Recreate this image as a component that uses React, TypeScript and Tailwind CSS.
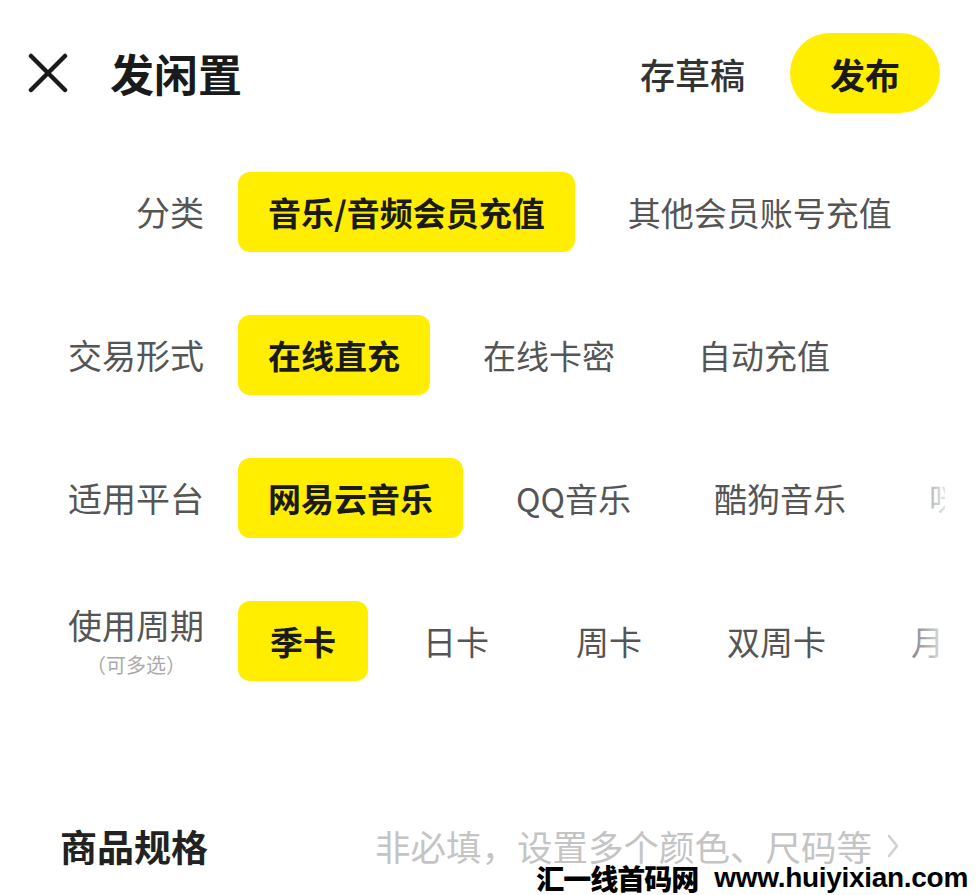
import React from "react";

const FONT = '"Noto Sans CJK SC", "Noto Sans", "Liberation Sans", sans-serif';

type Row = { label: string; sub?: string; options: string[] };

const rows: Row[] = [
  { label: "分类", options: ["音乐/音频会员充值", "其他会员账号充值"] },
  { label: "交易形式", options: ["在线直充", "在线卡密", "自动充值"] },
  { label: "适用平台", options: ["网易云音乐", "QQ音乐", "酷狗音乐", "咪咕音乐"] },
  { label: "使用周期", sub: "（可多选）", options: ["季卡", "日卡", "周卡", "双周卡", "月卡"] },
];

export default function App() {
  return (
    <div
      className="relative w-[976px] h-[895px] overflow-hidden bg-white text-[#1a1a1a]"
      style={{ fontFamily: FONT }}
    >
      {/* Header */}
      <div className="flex items-center h-[80px] mt-[33px] pl-[28px] pr-[36px]">
        <svg width="40" height="40" viewBox="0 0 40 40" className="shrink-0">
          <path d="M3 3 L37 37 M37 3 L3 37" stroke="#1a1a1a" strokeWidth="4.5" strokeLinecap="round" />
        </svg>
        <div className="ml-[42px] text-[44px] font-bold leading-none">发闲置</div>
        <div className="flex-1" />
        <div className="text-[35px] font-medium leading-none text-[#333]">存草稿</div>
        <button className="ml-[45px] w-[150px] h-[80px] rounded-full bg-[#ffee00] flex items-center justify-center text-[35px] font-bold leading-none text-[#1a1a1a]">
          发布
        </button>
      </div>

      {/* Option rows */}
      <div className="mt-[59px] flex flex-col gap-[63px]">
        {rows.map((row) => (
          <div key={row.label} className="flex items-center h-[80px]">
            <div className="w-[204px] shrink-0 flex justify-end">
              <div className="flex flex-col items-center">
                <span className="text-[34px] leading-[40px] text-[#555]">{row.label}</span>
                {row.sub && (
                  <span className="text-[20px] leading-[24px] text-[#aaa] mt-[8px]">{row.sub}</span>
                )}
              </div>
            </div>
            <div className="relative ml-[34px] w-[707px] h-[80px] overflow-hidden">
              <div className="flex gap-[23px] h-full">
                {row.options.map((opt, i) => (
                  <div
                    key={opt}
                    className={
                      i === 0
                        ? "shrink-0 min-w-[130px] h-[80px] px-[30px] rounded-[12px] bg-[#ffee00] flex items-center justify-center text-[33px] font-bold leading-none text-[#1a1a1a] whitespace-nowrap"
                        : "shrink-0 min-w-[130px] h-[80px] px-[30px] flex items-center justify-center text-[33px] leading-none text-[#555] whitespace-nowrap"
                    }
                  >
                    {opt}
                  </div>
                ))}
              </div>
              <div className="absolute right-0 top-0 h-full w-[50px] bg-linear-to-r from-transparent to-white/85" />
            </div>
          </div>
        ))}
      </div>

      {/* Spec row */}
      <div className="mt-[125px] flex items-center h-[80px] pl-[60px]">
        <div className="w-[315px] shrink-0 text-[37px] font-bold leading-none text-[#222]">商品规格</div>
        <div className="text-[35.5px] leading-none text-[#c4c4c4] whitespace-nowrap">非必填，设置多个颜色、尺码等</div>
        <svg width="14" height="26" viewBox="0 0 14 26" className="ml-[14px] shrink-0">
          <path d="M3 3 L11 13 L3 23" stroke="#d0d0d0" strokeWidth="2.5" fill="none" strokeLinecap="round" strokeLinejoin="round" />
        </svg>
      </div>

      {/* Watermark overlay */}
      <div className="absolute right-[8px] bottom-[3px] flex items-center gap-[16px] text-black leading-none whitespace-nowrap">
        <span className="text-[28px] font-black tracking-[-1px]">汇一线首码网</span>
        <span
          className="text-[28px] font-bold tracking-[-0.3px]"
          style={{ fontFamily: '"Liberation Sans", "DejaVu Sans", sans-serif' }}
        >
          www.huiyixian.com
        </span>
      </div>
    </div>
  );
}
